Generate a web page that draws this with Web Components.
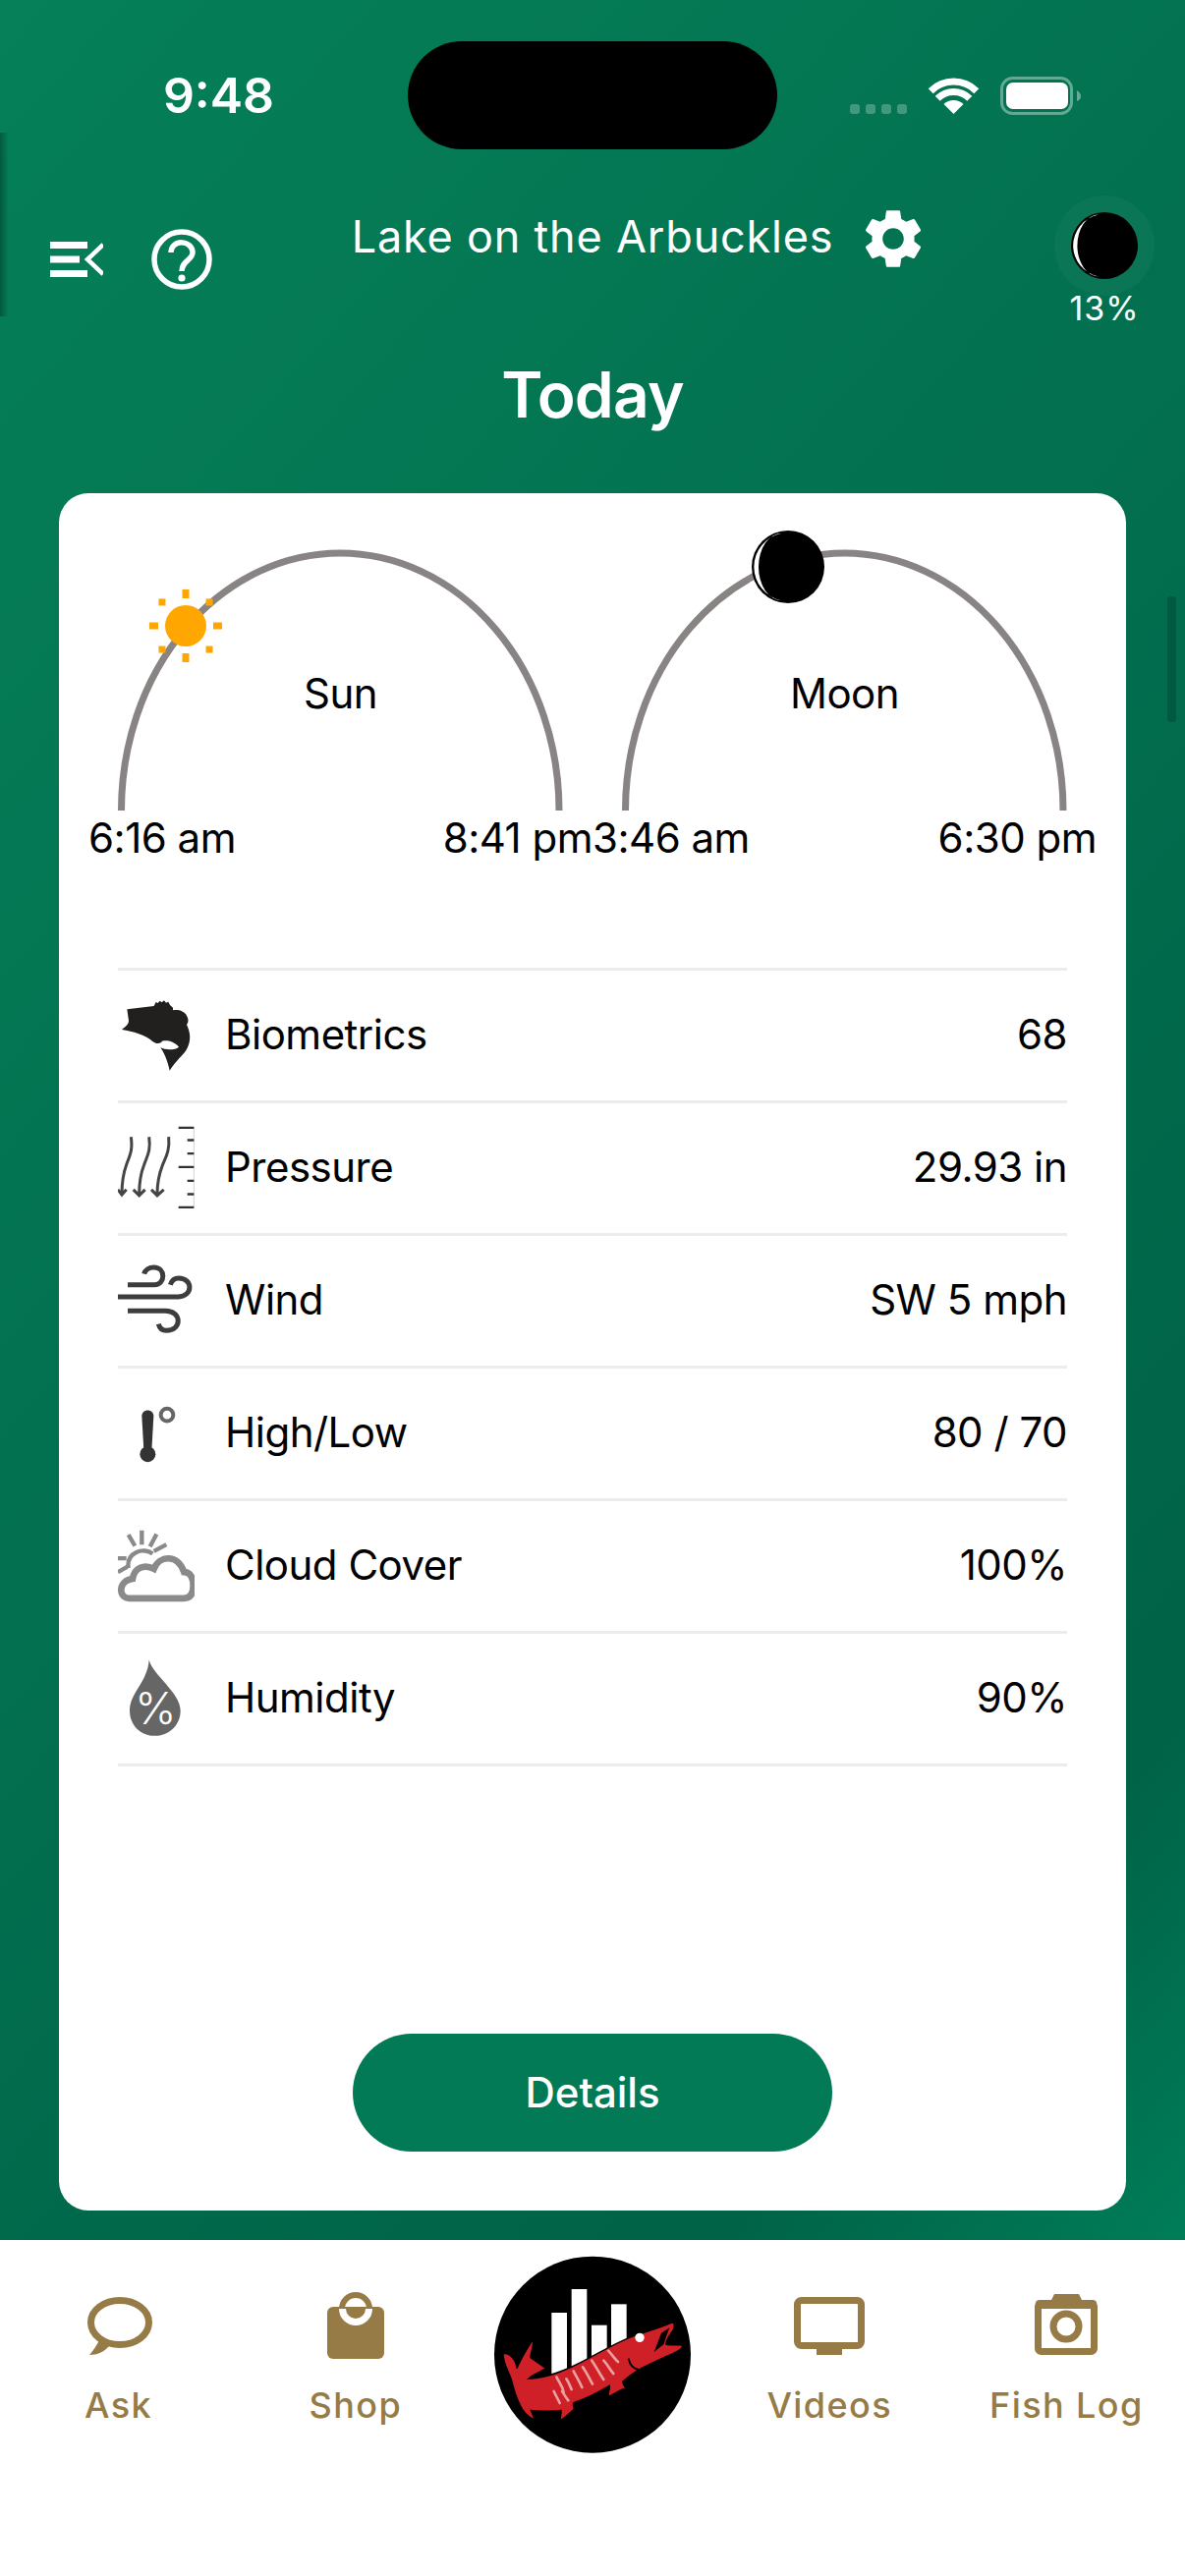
<!DOCTYPE html>
<html lang="en">
<head>
<meta charset="utf-8">
<title>Today</title>
<style>
  html, body { margin: 0; padding: 0; background: #fff; }
  body { font-family: Inter, "Noto Sans", sans-serif; }
</style>
</head>
<body>
<app-shell>
  <status-bar time="9:48"></status-bar>
  <nav-header title-text="Lake on the Arbuckles" phase="13%"></nav-header>
  <day-title>Today</day-title>
  <forecast-card>
    <sun-arc slot="arcs" kind="sun" label="Sun" start="6:16 am" end="8:41 pm"></sun-arc>
    <sun-arc slot="arcs" kind="moon" label="Moon" start="3:46 am" end="6:30 pm"></sun-arc>

    <stat-row label="Biometrics" value="68">
      <svg slot="icon" viewBox="60 85 234 270" width="78" height="90">
        <path fill="#221f1f" d="M88 143L170 133L176 121L182 124L188 117L194 122L201 116L207 123L214 120L219 130L228 138L228 146C245 143 262 148 270 162C276 172 276 182 270 190C282 215 284 240 270 265C258 285 238 298 218 330C214 310 205 282 190 260C205 268 235 268 246 258C232 240 208 236 195 240C190 248 178 250 165 240C145 222 105 210 72 205C84 195 92 190 93 178Z"/>
      </svg>
    </stat-row>
    <stat-row label="Pressure" value="29.93 in">
      <svg slot="icon" viewBox="60 490.5 234 270" width="78" height="90" fill="none" stroke="#454545" stroke-width="9">
        <path d="M100 533C106 575 96 590 86 618C76 646 72 675 72 708M60 694L72 710L86 694"/>
        <path d="M155 533C161 575 150 590 140 618C129 646 125 675 125 708M107 694L125 712L143 694"/>
        <path d="M215 533C219 575 206 595 196 620C186 646 180 675 180 708M162 694L180 712L200 694"/>
        <path stroke="#bbb" stroke-width="2" d="M292 503V750"/>
        <path stroke="#333" stroke-width="7" d="M245 505H292M272 543H292M272 584H292M245 625H292M272 667H292M272 708H292M245 748H292"/>
      </svg>
    </stat-row>
    <stat-row label="Wind" value="SW 5 mph">
      <svg slot="icon" viewBox="60 896 234 270" width="78" height="90" fill="none" stroke="#3d3d3d" stroke-width="15">
        <path d="M90 985H172C206 985 206 932 170 932C155 932 143 940 140 952"/>
        <path d="M60 1022H245C290 1020 290 965 245 965C232 965 224 973 220 985"/>
        <path d="M90 1065H205C256 1065 256 1125 208 1125C196 1125 187 1118 184 1105"/>
      </svg>
    </stat-row>
    <stat-row label="High/Low" value="80 / 70">
      <svg slot="icon" viewBox="60 100.5 234 270" width="78" height="90">
        <path fill="#333" d="M133 186C133 162 169 162 169 186L163 290H139Z"/>
        <circle cx="151" cy="302" r="24" fill="#333"/>
        <circle cx="210" cy="182" r="19" fill="none" stroke="#666" stroke-width="12"/>
      </svg>
    </stat-row>
    <stat-row label="Cloud Cover" value="100%">
      <svg slot="icon" viewBox="60 505.5 234 270" width="78" height="90" fill="none" stroke="#8a8a8a">
        <path stroke-width="20" d="M95 742C60 742 60 688 105 682C110 650 140 636 170 652C186 612 242 604 262 662C282 662 290 680 290 705C290 730 280 742 260 742Z"/>
        <path stroke-width="13" d="M92 650C85 600 140 585 166 606M133 535V578M92 548L112 582M178 546L158 584M208 578L170 598M60 620H86M60 662L88 646"/>
      </svg>
    </stat-row>
    <stat-row label="Humidity" value="90%">
      <svg slot="icon" viewBox="60 910.5 234 270" width="78" height="90">
        <path fill="#666" d="M155 930C165 975 251 1030 251 1085C251 1130 215 1162 173 1162C130 1162 96 1130 96 1085C96 1030 150 1000 155 930Z"/>
        <text x="175" y="1127" text-anchor="middle" fill="#fff" font-family="Inter, sans-serif" font-weight="300" font-size="135">%</text>
      </svg>
    </stat-row>

    <pill-button slot="action">Details</pill-button>
  </forecast-card>

  <tab-bar slot="tabs">
    <tab-item label="Ask">
      <svg viewBox="0 0 80 70" width="80" height="70" fill="none" stroke="#967b47" stroke-width="7">
        <ellipse cx="41" cy="32" rx="29.5" ry="22.5"/>
        <path fill="#967b47" stroke="none" d="M20 50L30 56C25 62 18 65 10 65C14 60 17 56 20 50Z"/>
      </svg>
    </tab-item>
    <tab-item label="Shop">
      <svg viewBox="0 0 80 70" width="80" height="70">
        <rect x="11" y="16" width="58" height="53" rx="6" fill="#967b47"/>
        <path fill="none" stroke="#967b47" stroke-width="6" d="M26 18A14 14 0 0 1 54 18"/>
        <path fill="none" stroke="#fff" stroke-width="7" d="M26.5 18A13.5 13.5 0 0 0 53.5 18"/>
      </svg>
    </tab-item>
    <fish-logo></fish-logo>
    <tab-item label="Videos">
      <svg viewBox="0 0 80 70" width="80" height="70" fill="none" stroke="#967b47" stroke-width="7">
        <rect x="7.5" y="9.5" width="65" height="46" rx="4"/>
        <rect x="27" y="59" width="26" height="6" fill="#967b47" stroke="none"/>
      </svg>
    </tab-item>
    <tab-item label="Fish Log">
      <svg viewBox="0 0 80 70" width="80" height="70" fill="none" stroke="#967b47" stroke-width="7">
        <path fill="#967b47" stroke="none" d="M9 12C9 10 11 9 13 9H25L28 3H53L56 9H67C69 9 71 10 71 12V18H9Z"/>
        <rect x="11.5" y="12.5" width="57" height="49" rx="3"/>
        <circle cx="40" cy="36" r="13"/>
      </svg>
    </tab-item>
  </tab-bar>
</app-shell>

<template id="tab-logo">
  <svg viewBox="8 0 720 720" width="240" height="240">
    <circle cx="368" cy="350" r="300" fill="#000"/>
    <g fill="#fff">
      <rect x="243" y="222" width="47" height="190"/>
      <rect x="304" y="150" width="47" height="240"/>
      <rect x="365" y="260" width="47" height="100"/>
      <rect x="425" y="196" width="47" height="130"/>
    </g>
    <path fill="#cf2027" stroke="#000" stroke-width="4" d="M95 346C116 345 135 365 137 392C150 360 170 330 187 302C188 325 180 345 178 358L226 392C205 405 185 410 172 424C240 420 300 392 355 362C400 338 450 308 497 292C535 280 575 268 612 252C622 256 618 270 610 282C600 295 594 306 592 318C608 322 625 320 643 321C645 332 630 340 610 348C580 360 550 375 520 390C495 402 475 420 460 432C462 445 468 450 470 452C450 458 432 472 415 478C418 465 420 455 420 445C385 465 350 485 310 497C308 505 310 512 312 516C298 530 285 542 268 552C270 540 274 530 272 520C240 525 210 522 180 520C184 530 188 540 191 549C172 540 155 525 145 500C130 470 125 440 118 420C108 395 95 375 95 346Z"/>
    <path fill="#000" d="M603 268L578 284L556 342L586 318L592 298Z"/>
    <path fill="none" stroke="#000" stroke-width="6" d="M478 362C482 382 494 394 510 396"/>
    <circle cx="512" cy="298" r="14" fill="#fff"/>
    <path fill="none" stroke="#e8a0a0" stroke-width="8" stroke-linecap="round" d="M258 418C266 435 276 445 280 465M288 424C296 435 298 445 304 456M310 400C320 420 328 432 336 450M338 388C350 405 358 422 368 440M366 368C378 385 388 405 402 426M402 368C414 380 420 395 432 408M416 338C428 350 434 362 446 372M250 462C256 475 262 485 268 498M275 462C282 472 286 480 294 490"/>
  </svg>
</template>

<script>
  // Luna reutilizada en la cabecera y en el arco del dia.
  function moonShape(cx, cy, r) {
    const k = r / 34;
    const x = cx - 6 * k;
    const top = cy - 31.4 * k;
    const bottom = cy + 31.4 * k;
    return `
      <circle cx="${cx}" cy="${cy}" r="${r}" fill="#000"/>
      <path fill="#fff" d="M${x} ${top}A${32 * k} ${32 * k} 0 0 0 ${x} ${bottom}A${21.6 * k} ${31.4 * k} 0 0 1 ${x} ${top}Z"/>
    `;
  }

  class AppShell extends HTMLElement {
    constructor() {
      super();
      this.attachShadow({ mode: 'open' });
      this.shadowRoot.innerHTML = `
        <style>
          :host { display: flex; flex-direction: column; width: 1206px; height: 2622px; overflow: hidden; position: relative; }
          main {
            height: 2280px;
            display: flex;
            flex-direction: column;
            background: linear-gradient(131.5deg, #058058 0%, #006247 85%, #007d58 100%);
            color: #fff;
          }
          .tabs { flex: 1; background: #fff; }
          .edge {
            position: absolute; left: 0; top: 135px; width: 9px; height: 187px;
            background: linear-gradient(90deg, rgba(0, 60, 40, .55), rgba(0, 60, 40, 0));
          }
          .scroll {
            position: absolute; left: 1188px; top: 607px; width: 9px; height: 128px;
            border-radius: 4px; background: #005a41;
          }
        </style>
        <main><slot></slot></main>
        <div class="tabs"><slot name="tabs"></slot></div>
        <div class="edge"></div>
        <div class="scroll"></div>
      `;
    }
  }

  class StatusBar extends HTMLElement {
    constructor() {
      super();
      this.attachShadow({ mode: 'open' });
    }

    connectedCallback() {
      this.shadowRoot.innerHTML = `
        <style>
          :host {
            display: grid;
            grid-template-columns: 415px 376px 1fr;
            height: 180px;
            padding-top: 42px;
            box-sizing: border-box;
            color: #fff;
          }
          .time { font: 600 50px/110px Inter, sans-serif; text-align: center; padding-left: 30px; }
          .island { height: 110px; background: #000; border-radius: 55px; }
          svg { display: block; margin: 35px 0 0 74px; }
        </style>
        <div class="time">${this.getAttribute('time')}</div>
        <div class="island"></div>
        <svg viewBox="865 77 240 42" width="240" height="42">
          <g fill="#fff" fill-opacity=".25">
            <rect x="865" y="106" width="10" height="10" rx="3"/>
            <rect x="881" y="106" width="10" height="10" rx="3"/>
            <rect x="897" y="106" width="10" height="10" rx="3"/>
            <rect x="913" y="106" width="10" height="10" rx="3"/>
          </g>
          <g fill="none" stroke="#fff" stroke-width="7">
            <path d="M947.2 92.7A33 33 0 0 1 993.8 92.7"/>
            <path d="M954.2 100.2A23 23 0 0 1 986.8 100.2"/>
          </g>
          <path fill="#fff" d="M970.5 116L960.5 106A14.5 14.5 0 0 1 980.5 106Z"/>
          <rect x="1019.5" y="79.5" width="71" height="36" rx="11" fill="none" stroke="#fff" stroke-opacity=".38" stroke-width="3"/>
          <rect x="1024" y="84" width="63" height="27" rx="7" fill="#fff"/>
          <path fill="#fff" fill-opacity=".4" d="M1096 92C1099 94 1100 96 1100 98C1100 100 1099 102 1096 103Z"/>
        </svg>
      `;
    }
  }

  class NavHeader extends HTMLElement {
    constructor() {
      super();
      this.attachShadow({ mode: 'open' });
    }

    connectedCallback() {
      this.shadowRoot.innerHTML = `
        <style>
          :host {
            display: grid;
            grid-template-columns: 1fr auto 1fr;
            height: 160px;
            padding: 0 32px;
            box-sizing: border-box;
            color: #fff;
            font-family: Inter, sans-serif;
          }
          .left { display: flex; align-items: center; gap: 48px; margin: 54px 0 0 19px; height: 60px; }
          .title { font-size: 45px; letter-spacing: .8px; line-height: 60px; margin-top: 31px; font-weight: 400; }
          .right { display: flex; justify-content: space-between; }
          .gear { margin: 27px 0 0 25px; display: block; }
          .moon { width: 102px; text-align: center; margin: 19px -1px 0 0; }
          .moon svg { display: block; }
          .moon span { display: block; font-size: 34px; letter-spacing: 1px; line-height: 40px; margin-top: -7px; }
        </style>
        <div class="left">
          <svg width="54" height="36" viewBox="0 0 54 36" fill="none" stroke="#fff">
            <path stroke-width="7" d="M0 3.5H38M0 18H30M0 32.5H38"/>
            <path stroke-width="4.5" d="M54 3L38 18L54 33"/>
          </svg>
          <svg width="64" height="64" viewBox="0 0 64 64" fill="none" stroke="#fff" stroke-width="5.5">
            <circle cx="32" cy="32" r="28"/>
            <path d="M21 25C21 11 43 12 43 25C43 33 32 33 32 44"/>
            <circle cx="32" cy="51" r="3.6" fill="#fff" stroke="none"/>
          </svg>
        </div>
        <div class="title">${this.getAttribute('title-text')}</div>
        <div class="right">
          <svg class="gear" width="72" height="72" viewBox="0 0 24 24" fill="#fff">
            <path d="M19.14 12.94c.04-.3.06-.61.06-.94 0-.32-.02-.64-.07-.94l2.03-1.58c.18-.14.23-.41.12-.61l-1.92-3.32c-.12-.22-.37-.29-.59-.22l-2.39.96c-.5-.38-1.03-.7-1.62-.94l-.36-2.54c-.04-.24-.24-.41-.48-.41h-3.84c-.24 0-.43.17-.47.41l-.36 2.54c-.59.24-1.13.57-1.62.94l-2.39-.96c-.22-.08-.47 0-.59.22L2.74 8.87c-.12.21-.08.47.12.61l2.03 1.58c-.05.3-.09.63-.09.94s.02.64.07.94l-2.03 1.58c-.18.14-.23.41-.12.61l1.92 3.32c.12.22.37.29.59.22l2.39-.96c.5.38 1.03.7 1.62.94l.36 2.54c.05.24.24.41.48.41h3.84c.24 0 .44-.17.47-.41l.36-2.54c.59-.24 1.13-.56 1.62-.94l2.39.96c.22.08.47 0 .59-.22l1.92-3.32c.12-.22.07-.47-.12-.61l-2.01-1.58zM12 15.6c-1.98 0-3.6-1.62-3.6-3.6s1.62-3.6 3.6-3.6 3.6 1.62 3.6 3.6-1.62 3.6-3.6 3.6z"/>
          </svg>
          <div class="moon">
            <svg width="102" height="102" viewBox="0 0 102 102">
              <circle cx="51" cy="51" r="51" fill="#fff" fill-opacity=".035"/>
              ${moonShape(51, 51, 34)}
            </svg>
            <span>${this.getAttribute('phase')}</span>
          </div>
        </div>
      `;
    }
  }

  class DayTitle extends HTMLElement {
    constructor() {
      super();
      this.attachShadow({ mode: 'open' });
      this.shadowRoot.innerHTML = `
        <style>
          :host {
            display: block;
            height: 124px;
            margin-bottom: 38px;
            color: #fff;
            font: 600 64px/124px Inter, sans-serif;
            letter-spacing: -.8px;
            text-align: center;
          }
        </style>
        <slot></slot>
      `;
    }
  }

  class ForecastCard extends HTMLElement {
    constructor() {
      super();
      this.attachShadow({ mode: 'open' });
      this.shadowRoot.innerHTML = `
        <style>
          :host {
            flex: 1;
            display: flex;
            flex-direction: column;
            margin: 0 60px 30px;
            padding: 28px 30px 60px;
            background: #fff;
            border-radius: 30px;
            color: #000;
          }
          .arcs { display: grid; grid-template-columns: 1fr 1fr; }
          .rows { margin: 107px 30px 0; border-top: 3px solid #ececec; }
          .action { margin-top: auto; display: flex; justify-content: center; }
        </style>
        <div class="arcs"><slot name="arcs"></slot></div>
        <div class="rows"><slot></slot></div>
        <div class="action"><slot name="action"></slot></div>
      `;
    }
  }

  class SunArc extends HTMLElement {
    constructor() {
      super();
      this.attachShadow({ mode: 'open' });
    }

    get marker() {
      if (this.getAttribute('kind') === 'moon') return moonShape(199, 47, 37);
      const rays = [0, 45, 90, 135, 180, 225, 270, 315].map((angle) => {
        const isDiagonal = angle % 90 !== 0;
        return `<rect x="-3.5" y="-${isDiagonal ? 37.5 : 37}" width="7" height="${isDiagonal ? 7 : 9}"
          transform="translate(99 107) rotate(${angle})${isDiagonal ? ' rotate(45 0 -34)' : ''}"/>`;
      }).join('');
      return `<g fill="#ffa600">${rays}<circle cx="99" cy="107" r="21"/></g>`;
    }

    connectedCallback() {
      this.shadowRoot.innerHTML = `
        <style>
          :host { display: block; position: relative; font: 400 42px/50px Inter, sans-serif; letter-spacing: -.5px; color: #000; }
          svg { display: block; overflow: visible; }
          .name { position: absolute; left: 0; right: 0; top: 151px; text-align: center; }
          .times { display: flex; justify-content: space-between; padding-top: 3px; white-space: nowrap; }
        </style>
        <svg viewBox="0 0 513 295" width="513" height="295">
          <path d="M33.5 295A222.75 262 0 0 1 479 295" fill="none" stroke="#888484" stroke-width="7"/>
          ${this.marker}
        </svg>
        <div class="name">${this.getAttribute('label')}</div>
        <div class="times">
          <span>${this.getAttribute('start')}</span>
          <span>${this.getAttribute('end')}</span>
        </div>
      `;
    }
  }

  class StatRow extends HTMLElement {
    constructor() {
      super();
      this.attachShadow({ mode: 'open' });
    }

    connectedCallback() {
      this.shadowRoot.innerHTML = `
        <style>
          :host {
            display: flex;
            align-items: center;
            height: 129px;
            padding-bottom: 3px;
            border-bottom: 3px solid #ececec;
            font: 400 42px/50px Inter, sans-serif;
            letter-spacing: -.5px;
            color: #000;
          }
          .icon { width: 78px; height: 90px; margin-right: 31px; flex: none; }
          .label { flex: 1; }
          ::slotted(svg) { display: block; }
        </style>
        <div class="icon"><slot name="icon"></slot></div>
        <span class="label">${this.getAttribute('label')}</span>
        <span>${this.getAttribute('value')}</span>
      `;
    }
  }

  class PillButton extends HTMLElement {
    constructor() {
      super();
      this.attachShadow({ mode: 'open' });
      this.shadowRoot.innerHTML = `
        <style>
          :host {
            display: flex;
            align-items: center;
            justify-content: center;
            width: 488px;
            height: 120px;
            border-radius: 60px;
            background: #017a55;
            color: #fff;
            font: 500 42px/50px Inter, sans-serif;
          }
        </style>
        <slot></slot>
      `;
    }
  }

  class TabBar extends HTMLElement {
    constructor() {
      super();
      this.attachShadow({ mode: 'open' });
      this.shadowRoot.innerHTML = `
        <style>
          :host { display: grid; grid-template-columns: repeat(5, 1fr); background: #fff; }
        </style>
        <slot></slot>
      `;
    }
  }

  class TabItem extends HTMLElement {
    constructor() {
      super();
      this.attachShadow({ mode: 'open' });
    }

    connectedCallback() {
      this.shadowRoot.innerHTML = `
        <style>
          :host {
            display: flex;
            flex-direction: column;
            align-items: center;
            padding-top: 52px;
            color: #967b47;
            font: 500 36px/44px Inter, sans-serif;
            letter-spacing: 1.4px;
            white-space: nowrap;
          }
          ::slotted(svg) { display: block; }
          .label { margin-top: 24px; }
        </style>
        <slot></slot>
        <span class="label">${this.getAttribute('label')}</span>
      `;
    }
  }

  class FishLogo extends HTMLElement {
    constructor() {
      super();
      this.attachShadow({ mode: 'open' });
      const logo = document.getElementById('tab-logo').content.cloneNode(true);
      const style = document.createElement('style');
      style.textContent = ':host { display: flex; justify-content: center; } svg { display: block; flex: none; }';
      this.shadowRoot.append(style, logo);
    }
  }

  customElements.define('app-shell', AppShell);
  customElements.define('status-bar', StatusBar);
  customElements.define('nav-header', NavHeader);
  customElements.define('day-title', DayTitle);
  customElements.define('forecast-card', ForecastCard);
  customElements.define('sun-arc', SunArc);
  customElements.define('stat-row', StatRow);
  customElements.define('pill-button', PillButton);
  customElements.define('tab-bar', TabBar);
  customElements.define('tab-item', TabItem);
  customElements.define('fish-logo', FishLogo);
</script>
</body>
</html>
